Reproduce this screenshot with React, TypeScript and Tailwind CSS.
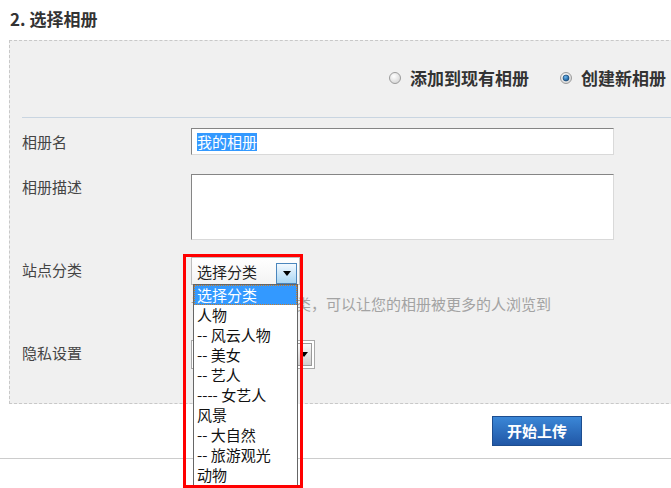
/**
 * AlbumStep - "选择相册" step of the upload form
 */

const categories = [
  "选择分类",
  "人物",
  "-- 风云人物",
  "-- 美女",
  "-- 艺人",
  "---- 女艺人",
  "风景",
  "-- 大自然",
  "-- 旅游观光",
  "动物",
];

function Radio({ checked }: { checked?: boolean }) {
  return (
    <svg width="12" height="12" viewBox="0 0 12 12" className="shrink-0">
      <defs>
        <radialGradient id={checked ? "rOn" : "rOff"} cx="40%" cy="35%" r="70%">
          <stop offset="0%" stopColor="#ffffff" />
          <stop offset="100%" stopColor="#d4d4d4" />
        </radialGradient>
        <radialGradient id="dot" cx="40%" cy="35%" r="70%">
          <stop offset="0%" stopColor="#6fb6ec" />
          <stop offset="100%" stopColor="#0b4f8e" />
        </radialGradient>
      </defs>
      <circle cx="6" cy="6" r="5.5" fill={`url(#${checked ? "rOn" : "rOff"})`} stroke="#9c9c9c" />
      {checked && <circle cx="6" cy="6" r="3" fill="url(#dot)" stroke="#123e66" strokeWidth="0.6" />}
    </svg>
  );
}

function Caret() {
  return (
    <svg width="8" height="5" viewBox="0 0 8 5">
      <path d="M0 0h8L4 5z" fill="#000" />
    </svg>
  );
}

export default function App() {
  return (
    <div className="relative w-[671px] h-[488px] overflow-hidden bg-white text-[#333] font-['Noto_Sans_CJK_SC',sans-serif]">
      <h2 className="h-[40px] pl-[10px] pt-[7px] text-[17px] leading-[24px] font-bold text-[#333]">
        2. 选择相册
      </h2>

      <div className="ml-[9px] w-[700px] h-[364px] border border-dashed border-[#c8c8c8] bg-[#f0f0f0]">
        <div className="ml-[12px]">
          {/* album mode */}
          <div className="h-[77px] pb-[2px] pr-[42px] flex items-center justify-end border-b border-[#c9d5e1]">
            <label className="flex items-center gap-[9px] text-[17px] leading-[20px] font-bold">
              <Radio />
              添加到现有相册
            </label>
            <label className="ml-[31px] flex items-center gap-[9px] text-[17px] leading-[20px] font-bold">
              <Radio checked />
              创建新相册
            </label>
          </div>

          {/* name */}
          <div className="mt-[10px] flex items-center">
            <div className="w-[169px] text-[15px] leading-[20px] text-[#444]">相册名</div>
            <div className="w-[423px] h-[27px] bg-white border border-t-[#858585] border-l-[#858585] border-r-[#d9d9d9] border-b-[#d9d9d9] flex items-center pl-[5px]">
              <span className="bg-[#3399ff] text-white text-[15px] leading-[18px]">我的相册</span>
            </div>
          </div>

          {/* description */}
          <div className="mt-[19px] flex items-start">
            <div className="w-[169px] pt-[3px] text-[15px] leading-[20px] text-[#444]">相册描述</div>
            <div className="w-[423px] h-[66px] bg-white border border-t-[#858585] border-l-[#858585] border-r-[#d9d9d9] border-b-[#d9d9d9]" />
          </div>

          {/* category */}
          <div className="mt-[17px] flex items-start">
            <div className="w-[169px] text-[15px] leading-[26px] text-[#444]">站点分类</div>
            <div>
              <div className="relative w-[109px] h-[28px]">
                <div className="w-full h-full border border-[#bdbdbd] bg-gradient-to-b from-white to-[#f3f3f3] flex items-center pl-[5px] pt-[1px]">
                  <span className="text-[15px] leading-[20px] text-[#222]">选择分类</span>
                  <span className="ml-auto mr-[2px] mt-[3px] w-[21px] h-[21px] border border-[#4a86bd] bg-gradient-to-b from-[#f2f9ff] to-[#a9d6f3] flex items-center justify-center">
                    <Caret />
                  </span>
                </div>

                {/* open option list */}
                <ul className="absolute left-[2px] top-[27px] z-10 w-[105px] border border-[#666] bg-white">
                  {categories.map((c, i) => (
                    <li
                      key={c}
                      className={
                        i === 0
                          ? "h-[20px] pl-[2px] text-[15px] leading-[18px] whitespace-pre bg-[#3399ff] text-white border border-dotted border-[#c87d2a]"
                          : "h-[20px] pl-[3px] text-[15px] leading-[20px] whitespace-pre text-[#111]"
                      }
                    >
                      {c}
                    </li>
                  ))}
                </ul>

                <div className="absolute left-[-8px] top-[-3px] z-20 w-[120px] h-[234px] border-[3px] border-[#ff0000] pointer-events-none" />
              </div>
              <p className="mt-[9px] text-[15px] leading-[20px] text-[#a3a3a3] whitespace-nowrap">
                请选择合适的分类，可以让您的相册被更多的人浏览到
              </p>
            </div>
          </div>

          {/* privacy */}
          <div className="mt-[26px] flex items-start">
            <div className="w-[169px] text-[15px] leading-[26px] text-[#444]">隐私设置</div>
            <div className="w-[124px] h-[29px] border border-[#a8a8a8] bg-white flex items-center justify-end">
              <span className="mr-[2px] w-[17px] h-[23px] border border-[#9a9a9a] bg-gradient-to-b from-[#fafafa] to-[#cfcfcf] flex items-center justify-center">
                <Caret />
              </span>
            </div>
          </div>
        </div>
      </div>

      <button className="mt-[12px] ml-[492px] w-[90px] h-[30px] border border-[#1d4d8f] bg-gradient-to-b from-[#3b87d7] to-[#2157a6] text-white text-[15px] font-bold leading-[28px]">
        开始上传
      </button>

      <div className="mt-[12px] border-t border-[#cccccc]" />
    </div>
  );
}
